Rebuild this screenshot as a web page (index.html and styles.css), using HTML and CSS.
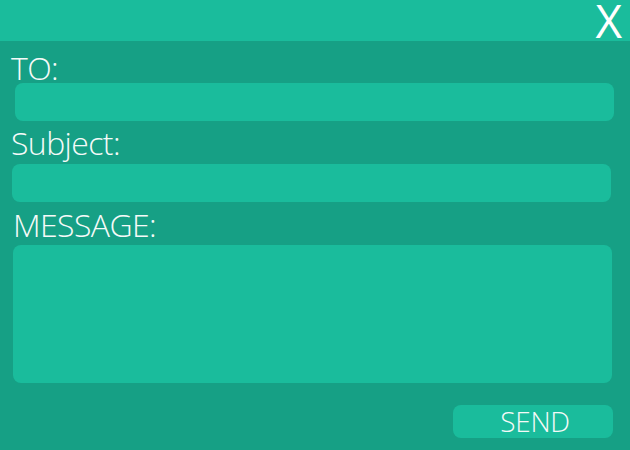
FILE: index.html
```html
<!DOCTYPE html>
<html>
<head>
<meta charset="utf-8">
<link rel="stylesheet" href="styles.css">
</head>
<body>
<div class="window">
  <header class="titlebar">
    <span class="close">X</span>
  </header>
  <form class="mail-form">
    <label class="label label-to">TO:</label>
    <input class="field field-to" type="text">
    <label class="label label-subject">Subject:</label>
    <input class="field field-subject" type="text">
    <label class="label label-message">MESSAGE:</label>
    <textarea class="field field-message"></textarea>
    <div class="actions">
      <button class="send" type="button">SEND</button>
    </div>
  </form>
</div>
</body>
</html>
```
FILE: styles.css
```css
html, body {
  margin: 0;
  padding: 0;
}
body {
  width: 630px;
  height: 450px;
  overflow: hidden;
  background: #16a085;
  font-family: "Open Sans", "Noto Sans", sans-serif;
  color: #f5faf8;
}
.window {
  display: flex;
  flex-direction: column;
  height: 450px;
}
.titlebar {
  height: 41px;
  background: #1abc9c;
  display: flex;
  justify-content: flex-end;
  align-items: flex-start;
  padding-right: 8px;
}
.close {
  display: block;
  font-size: 46px;
  font-weight: 400;
  line-height: 41px;
  height: 41px;
  color: #ffffff;
}
.mail-form {
  display: flex;
  flex-direction: column;
  padding-top: 12px;
}
.label {
  display: block;
  font-size: 32px;
  font-weight: 300;
  letter-spacing: -0.6px;
  line-height: 30px;
  height: 30px;
  padding-left: 11px;
}
.label-subject {
  margin-top: 7px;
  padding-left: 11px;
}
.label-message {
  margin-top: 8px;
  padding-left: 13px;
}
.field {
  display: block;
  box-sizing: border-box;
  width: 599px;
  border: none;
  outline: none;
  border-radius: 8px;
  background: #1abc9c;
  font: inherit;
  color: inherit;
  padding: 0;
  resize: none;
}
.field-to {
  height: 38px;
  margin: 0 0 0 15px;
}
.field-subject {
  height: 38px;
  margin: 6px 0 0 12px;
}
.field-message {
  height: 138px;
  margin: 5px 0 0 13px;
}
.actions {
  display: flex;
  justify-content: flex-end;
  padding-right: 17px;
  margin-top: 22px;
}
.send {
  width: 160px;
  height: 33px;
  border: none;
  border-radius: 8px;
  background: #1abc9c;
  color: #f5faf8;
  font-family: "Open Sans", "Noto Sans", sans-serif;
  font-weight: 300;
  font-size: 28px;
  line-height: 33px;
  padding: 0 0 0 4px;
  letter-spacing: -0.3px;
}
```
